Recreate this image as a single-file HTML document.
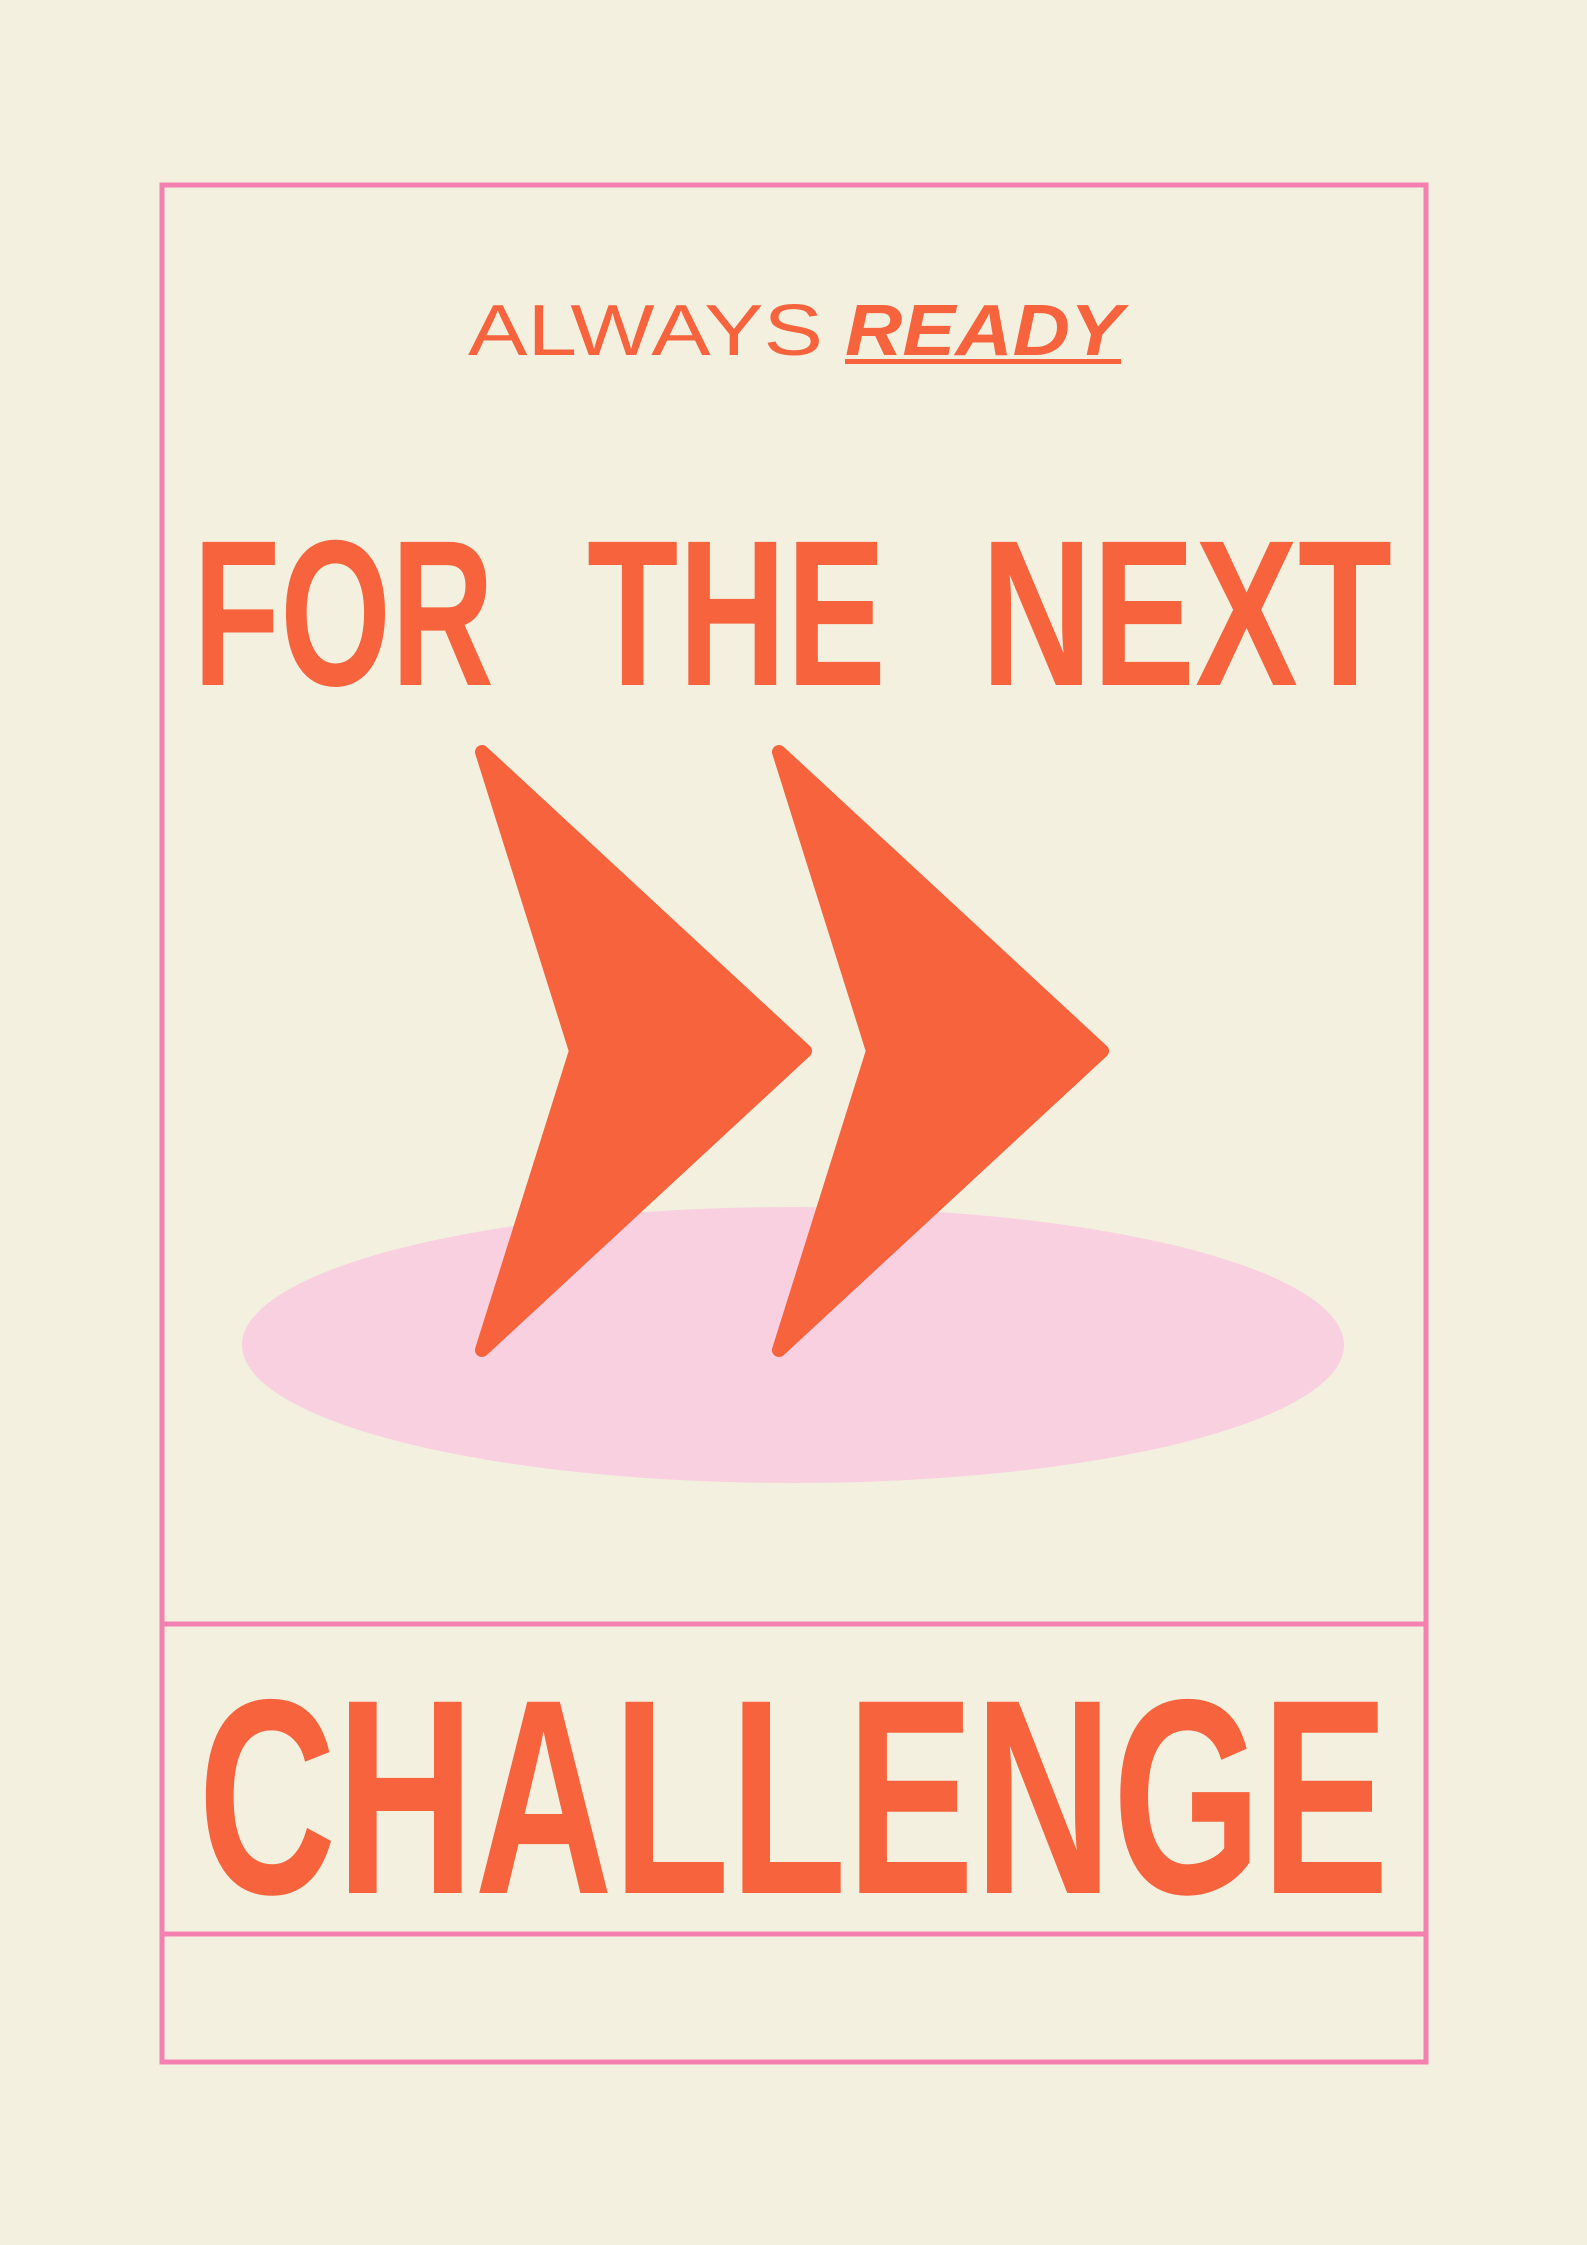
<!DOCTYPE html>
<html><head><meta charset="utf-8"><style>
html,body{margin:0;padding:0;background:#f3f0e0;}
svg{display:block}
</style></head><body>
<svg width="1587" height="2245" viewBox="0 0 1587 2245" xmlns="http://www.w3.org/2000/svg">
<rect width="1587" height="2245" fill="#f3f0e0"/>
<rect x="162" y="185" width="1264" height="1877" fill="none" stroke="#f47fb1" stroke-width="5"/>
<line x1="162" y1="1624" x2="1426" y2="1624" stroke="#f47fb1" stroke-width="5"/>
<line x1="162" y1="1934" x2="1426" y2="1934" stroke="#f47fb1" stroke-width="5"/>
<text x="468" y="355" font-family="Liberation Sans, sans-serif" font-size="72" fill="#f6633c" textLength="355" lengthAdjust="spacingAndGlyphs">ALWAYS</text>
<text x="845" y="355" font-family="Liberation Sans, sans-serif" font-size="72" font-weight="bold" font-style="italic" fill="#f6633c" textLength="278" lengthAdjust="spacingAndGlyphs">READY</text>
<rect x="845" y="359" width="276" height="5" fill="#f6633c"/>
<g font-family="Liberation Sans, sans-serif" font-weight="bold" font-size="208" fill="#f6633c">
<text x="193" y="685" textLength="301" lengthAdjust="spacingAndGlyphs">FOR</text>
<text x="587" y="685" textLength="299" lengthAdjust="spacingAndGlyphs">THE</text>
<text x="981" y="685" textLength="411" lengthAdjust="spacingAndGlyphs">NEXT</text>
<text x="198" y="1893" font-size="278" textLength="1191" lengthAdjust="spacingAndGlyphs">CHALLENGE</text>
</g>
<ellipse cx="793" cy="1345" rx="551" ry="138" fill="#f8d0e0"/>
<g fill="#f6633c" stroke="#f6633c" stroke-width="14" stroke-linejoin="round">
<polygon points="482,752 805,1051 482,1350 576,1051"/>
<polygon points="779,752 1102,1051 779,1350 873,1051"/>
</g>
</svg>
</body></html>
